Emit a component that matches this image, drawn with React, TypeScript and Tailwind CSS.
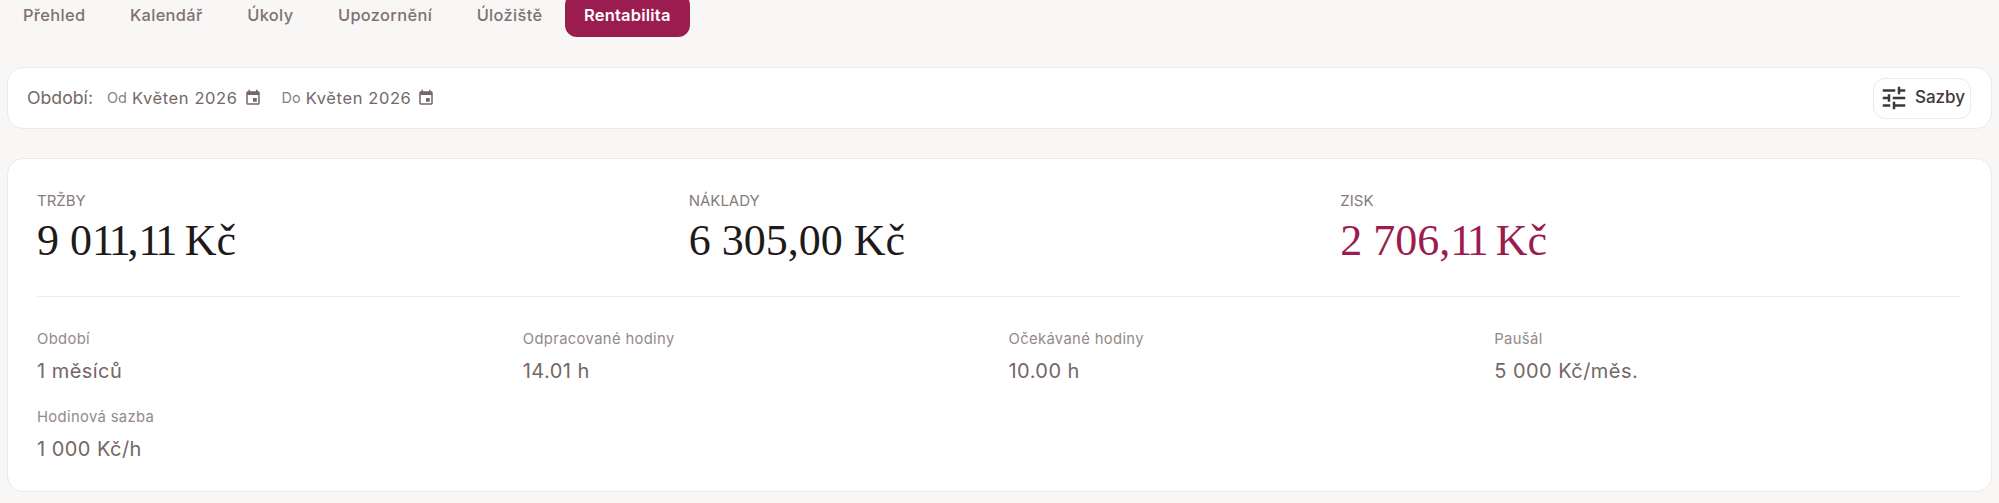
const tabs = ["Přehled", "Kalendář", "Úkoly", "Upozornění", "Úložiště"];

function CalendarIcon() {
  return (
    <svg viewBox="0 0 24 24" className="w-[18px] h-[18px] fill-[#746767]">
      <path d="M17 12h-5v5h5v-5zM16 1v2H8V1H6v2H5c-1.11 0-1.99.9-1.99 2L3 19c0 1.1.89 2 2 2h14c1.1 0 2-.9 2-2V5c0-1.1-.9-2-2-2h-1V1h-2zm3 18H5V8h14v11z" />
    </svg>
  );
}

function TuneIcon() {
  return (
    <svg viewBox="0 0 24 24" className="w-[30px] h-[30px] fill-[#3f3838]">
      <path d="M3 17v2h6v-2H3zM3 5v2h10V5H3zm10 16v-2h8v-2h-8v-2h-2v6h2zM7 9v2H3v2h4v2h2V9H7zm14 4v-2H11v2h10zm-6-4h2V7h4V5h-4V3h-2v6z" />
    </svg>
  );
}

function Month({ prefix }: { prefix: string }) {
  return (
    <div className="flex items-center">
      <span className="text-[14.5px] text-[#8a7f7f] mr-[5px]">{prefix}</span>
      <span className="text-[16.5px] tracking-[0.6px] text-[#746767] mr-[6px]">Květen 2026</span>
      <CalendarIcon />
    </div>
  );
}

function Big({ label, children, color }: { label: string; children: React.ReactNode; color: string }) {
  return (
    <div>
      <div className="text-[15px] leading-[16px] text-[#857b7b] uppercase">{label}</div>
      <div className={`font-['Liberation_Serif',serif] text-[44px] leading-[52px] mt-[6px] ${color}`}>{children}</div>
    </div>
  );
}

function Small({ label, value }: { label: string; value: string }) {
  return (
    <div>
      <div className="text-[14.8px] leading-[16px] text-[#938989] tracking-[0.35px]">{label}</div>
      <div className="text-[20px] leading-[24px] mt-[12px] tracking-[0.45px] text-[#746767]">{value}</div>
    </div>
  );
}

function Ones({ children }: { children: string }) {
  return <span className="tracking-[-3.5px]">{children}</span>;
}

export default function App() {
  return (
    <div className="h-[503px] overflow-hidden bg-[#f9f7f5] font-['Inter',sans-serif] px-[7px]">
      <nav className="flex items-center gap-[12.5px] -mt-[7px] h-[44px]">
        {tabs.map((t) => (
          <button key={t} className="h-[44px] px-4 text-[16.4px] tracking-[0.35px] font-medium text-[#7d7272]">
            {t}
          </button>
        ))}
        <button className="h-[44px] px-[19px] -ml-[6px] rounded-[12px] bg-[#9b1c4f] text-white text-[16.5px] tracking-[0.2px] font-semibold">
          Rentabilita
        </button>
      </nav>
      <section className="mt-[30px] h-[62px] flex items-center justify-between bg-white border border-[#ece9e6] rounded-[16px] pl-[19px] pr-[20px]">
        <div className="flex items-center">
          <span className="text-[17.7px] text-[#746767] mr-[14px]">Období:</span>
          <Month prefix="Od" />
          <div className="w-[20px]" />
          <Month prefix="Do" />
        </div>
        <button className="h-[41px] w-[98px] flex items-center justify-center gap-[6px] border border-[#ece9e6] rounded-[12px] text-[17px] font-medium text-[#3f3838]">
          <TuneIcon />
          Sazby
        </button>
      </section>
      <section className="mt-[29px] h-[334px] bg-white border border-[#ece9e6] rounded-[16px] pt-[34px] pl-[29px] pr-[31px]">
        <div className="grid grid-cols-3 gap-8 pb-[29px] border-b border-[#efecea]">
          <Big label="Tržby" color="text-[#1f1a1a]">9 0<Ones>11</Ones>,<Ones>11</Ones> Kč</Big>
          <Big label="Náklady" color="text-[#1f1a1a]">6 305,00 Kč</Big>
          <Big label="Zisk" color="text-[#9b1c4f]">2 706,<span className="tracking-[-4px]">11</span> Kč</Big>
        </div>
        <div className="grid grid-cols-4 gap-x-5 gap-y-[26px] pt-[34px]">
          <Small label="Období" value="1 měsíců" />
          <Small label="Odpracované hodiny" value="14.01 h" />
          <Small label="Očekávané hodiny" value="10.00 h" />
          <Small label="Paušál" value="5 000 Kč/měs." />
          <Small label="Hodinová sazba" value="1 000 Kč/h" />
        </div>
      </section>
    </div>
  );
}
